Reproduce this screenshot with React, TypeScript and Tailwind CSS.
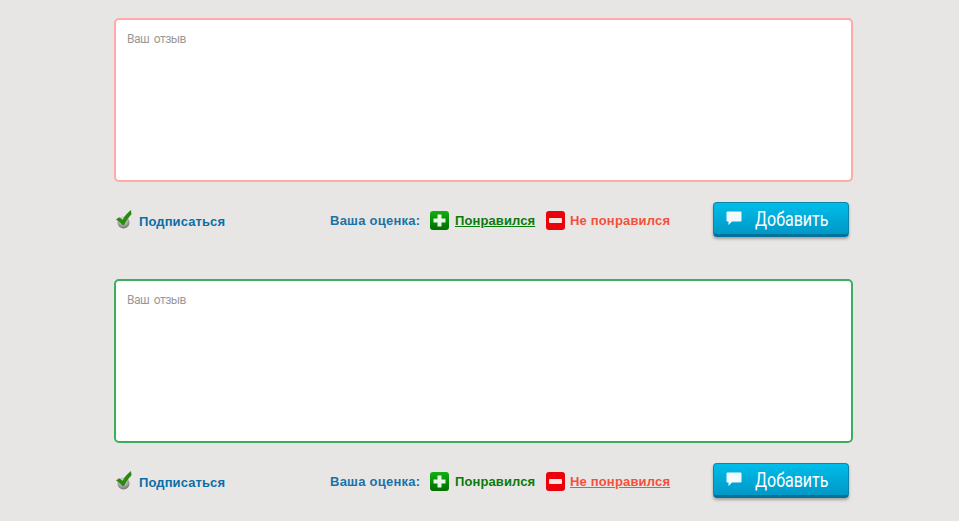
const sans = "font-['Liberation_Sans',Arial,sans-serif]";

function Check() {
  return (
    <svg width="16" height="19" viewBox="0 0 16 19" className="shrink-0 ml-[2px]">
      <defs>
        <radialGradient id="ball" cx="45%" cy="30%" r="75%">
          <stop offset="0%" stopColor="#ececec" />
          <stop offset="55%" stopColor="#a8a8a8" />
          <stop offset="100%" stopColor="#6a6a6a" />
        </radialGradient>
      </defs>
      <circle cx="7.5" cy="12.5" r="6" fill="url(#ball)" />
      <path d="M0 9.5 L3.2 7.2 L6.6 9.8 C8.6 6 11.4 3 15 0 L15.5 4.2 C12.5 7.5 10.2 10.8 8 15 L6.4 15 C4.8 12.8 2.6 11 0 9.5 Z" fill="#2a8a10" />
    </svg>
  );
}

function Plus() {
  return (
    <span className="mt-[2px] w-[19px] h-[19px] rounded-[3px] bg-gradient-to-b from-[#12b012] to-[#006f00] flex items-center justify-center shrink-0">
      <svg width="13" height="13" viewBox="0 0 13 13">
        <path d="M4.5 0.5 H8.5 V4.5 H12.5 V8.5 H8.5 V12.5 H4.5 V8.5 H0.5 V4.5 H4.5 Z" fill="#e8f5e6" />
      </svg>
    </span>
  );
}

function Minus() {
  return (
    <span className="mt-[2px] w-[19px] h-[19px] rounded-[3px] bg-[#ec0009] flex items-center justify-center shrink-0">
      <svg width="13" height="5" viewBox="0 0 13 5">
        <rect x="0" y="0" width="13" height="5" rx="1" fill="#f8e4e0" />
      </svg>
    </span>
  );
}

function Block({ color, liked }: { color: string; liked: boolean }) {
  return (
    <div className="flex flex-col">
      <div className={`h-[164px] rounded-[5px] border-2 bg-white px-[11px] py-[11px] ${color}`}>
        <span className="block text-[12px] leading-[16px] text-[#999999] tracking-[-0.5px] font-['Roboto',sans-serif] [word-spacing:2px]">Ваш отзыв</span>
      </div>
      <div className={`flex items-center h-[35px] mt-[20px] ${sans} text-[13px] font-bold`}>
        <Check />
        <a className="ml-[7px] w-[191px] text-[#0b6ea8] mt-[4px] tracking-[0.1px]">Подписаться</a>
        <span className="w-[100px] mt-[2px] text-[#1a72a8] tracking-[0.25px]">Ваша оценка:</span>
        <Plus />
        <a className={`ml-[6px] w-[91px] mt-[2px] tracking-[0.1px] text-[#0a7a0a] ${liked ? "underline" : ""}`}>Понравился</a>
        <Minus />
        <a className={`ml-[5px] w-[143px] mt-[2px] tracking-[0.17px] text-[#f4503c] ${liked ? "" : "underline"}`}>Не понравился</a>
        <button className="w-[136px] h-[35px] rounded-[4px] flex items-center pl-[12px] bg-gradient-to-b from-[#00bdea] to-[#0098c6] border border-[#0a86ab] border-b-[3px] border-b-[#03729a] shadow-[0_2px_3px_rgba(0,0,0,0.3)]">
          <svg width="16" height="15" viewBox="0 0 16 15" className="shrink-0">
            <path d="M1.5 0.5 H14.5 A1 1 0 0 1 15.5 1.5 V9.5 A1 1 0 0 1 14.5 10.5 H6 L2.5 14 V10.5 H1.5 A1 1 0 0 1 0.5 9.5 V1.5 A1 1 0 0 1 1.5 0.5 Z" fill="#f2fbfe" />
          </svg>
          <span className="ml-[13px] text-white font-normal text-[20px] leading-none font-['Roboto',sans-serif] scale-x-[0.8] origin-left">Добавить</span>
        </button>
      </div>
    </div>
  );
}

export default function App() {
  return (
    <div className="w-[959px] h-[521px] overflow-hidden bg-[#e8e6e4] pt-[18px] pl-[114px]">
      <div className="w-[739px] flex flex-col gap-[42px]">
        <Block color="border-[#ffa9a9]" liked={true} />
        <Block color="border-[#3cae5e]" liked={false} />
      </div>
    </div>
  );
}
